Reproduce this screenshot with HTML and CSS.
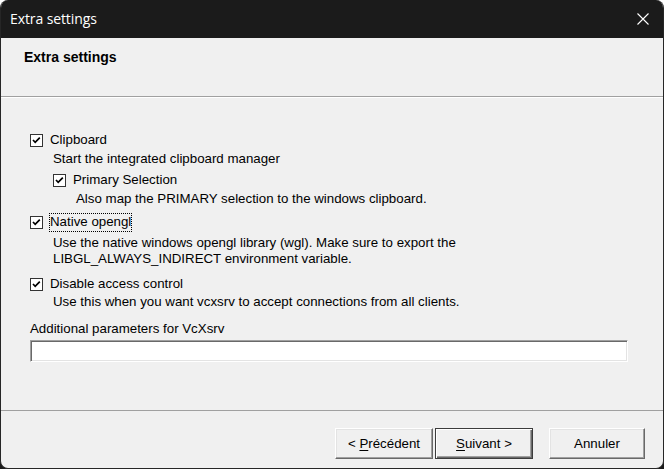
FILE: index.html
```html
<!DOCTYPE html>
<html>
<head>
<meta charset="utf-8">
<link rel="stylesheet" href="styles.css">
</head>
<body>
<div class="window">
  <div class="titlebar">
    <span class="title">Extra settings</span>
    <svg class="close" width="12" height="12" viewBox="0 0 12 12"><path d="M0.5 0.5 L11.5 11.5 M11.5 0.5 L0.5 11.5" stroke="#ffffff" stroke-width="1.1" fill="none"/></svg>
  </div>
  <div class="header">
    <h1 class="heading">Extra settings</h1>
  </div>
  <div class="content">
    <div class="option">
      <div class="check">
        <span class="box"><svg width="11" height="11" viewBox="0 0 11 11"><path d="M2 5 L4.2 7.3 L8.8 2.6" stroke="#000" stroke-width="1.7" fill="none"/></svg></span>
        <span class="label">Clipboard</span>
      </div>
      <p class="desc">Start the integrated clipboard manager</p>
      <div class="option sub">
        <div class="check">
          <span class="box"><svg width="11" height="11" viewBox="0 0 11 11"><path d="M2 5 L4.2 7.3 L8.8 2.6" stroke="#000" stroke-width="1.7" fill="none"/></svg></span>
          <span class="label">Primary Selection</span>
        </div>
        <p class="desc">Also map the PRIMARY selection to the windows clipboard.</p>
      </div>
    </div>
    <div class="option second">
      <div class="check">
        <span class="box"><svg width="11" height="11" viewBox="0 0 11 11"><path d="M2 5 L4.2 7.3 L8.8 2.6" stroke="#000" stroke-width="1.7" fill="none"/></svg></span>
        <span class="label focus">Native opengl</span>
      </div>
      <p class="desc wide">Use the native windows opengl library (wgl). Make sure to export the<br>LIBGL_ALWAYS_INDIRECT environment variable.</p>
    </div>
    <div class="option third">
      <div class="check">
        <span class="box"><svg width="11" height="11" viewBox="0 0 11 11"><path d="M2 5 L4.2 7.3 L8.8 2.6" stroke="#000" stroke-width="1.7" fill="none"/></svg></span>
        <span class="label">Disable access control</span>
      </div>
      <p class="desc tight">Use this when you want vcxsrv to accept connections from all clients.</p>
    </div>
    <div class="field">
      <span class="field-label">Additional parameters for VcXsrv</span>
      <div class="input"></div>
    </div>
  </div>
  <div class="footer">
    <button class="btn">&lt; <u>P</u>récédent</button>
    <button class="btn default"><u>S</u>uivant &gt;</button>
    <button class="btn cancel">Annuler</button>
  </div>
</div>
</body>
</html>
```

FILE: styles.css
```css
* { box-sizing: border-box; }
html, body {
  margin: 0;
  padding: 0;
  width: 664px;
  height: 469px;
  overflow: hidden;
  background: linear-gradient(#ffffff 50%, #1b1b1b 50%);
}
.window {
  width: 664px;
  height: 469px;
  background: #f0f0f0;
  border: 1px solid #262626;
  border-top: none;
  border-radius: 8px;
  overflow: hidden;
  display: flex;
  flex-direction: column;
  font-family: "Liberation Sans", Arial, sans-serif;
  font-size: 13.3px;
  color: #000;
}
.titlebar {
  height: 38px;
  flex: none;
  background: #1b1b1b;
  display: flex;
  align-items: center;
  justify-content: space-between;
  padding: 0 15px 0 10px;
  margin: 0 -1px;
}
.title {
  color: #ffffff;
  font-family: "Open Sans", "Liberation Sans", sans-serif;
  font-size: 14px;
  letter-spacing: -0.1px;
  padding-bottom: 1px;
}
.close { display: block; }
.header {
  height: 59px;
  flex: none;
  padding: 11px 0 0 23px;
  border-bottom: 1px solid #a0a0a0;
  box-shadow: 0 1px 0 #ffffff;
}
.heading {
  margin: 0;
  font-size: 14px;
  font-weight: bold;
  line-height: 16px;
}
.content {
  flex: 1;
  padding: 35px 0 0 29px;
  display: flex;
  flex-direction: column;
}
.option {
  display: flex;
  flex-direction: column;
}
.option.sub {
  margin: 5px 0 0 23px;
}
.option.second { margin-top: 7px; }
.option.third { margin-top: 9px; }
.check {
  display: flex;
  align-items: center;
  gap: 7px;
  height: 16px;
}
.box {
  width: 13px;
  height: 13px;
  flex: none;
  background: #ffffff;
  border: 1px solid #333333;
  display: flex;
  align-items: center;
  justify-content: center;
}
.box svg { display: block; }
.label { line-height: 16px; }
.focus {
  outline: 1px dotted #000;
  outline-offset: 0;
  padding-bottom: 1px;
}
.desc {
  margin: 3px 0 0 23px;
  line-height: 16px;
}
.desc.wide { margin-top: 5px; }
.desc.tight { margin-top: 2px; }
.field {
  margin-top: 11px;
  display: flex;
  flex-direction: column;
  gap: 3px;
}
.field-label { line-height: 16px; }
.input {
  width: 598px;
  height: 22px;
  background: #ffffff;
  border-style: solid;
  border-width: 1px;
  border-color: #a0a0a0 #ffffff #ffffff #a0a0a0;
  box-shadow: inset 1px 1px 0 #696969, inset -1px -1px 0 #e3e3e3;
}
.footer {
  height: 58px;
  flex: none;
  border-top: 1px solid #a0a0a0;
  display: flex;
  justify-content: flex-end;
  align-items: flex-start;
  padding: 17px 18px 0 0;
  gap: 2px;
}
.btn {
  width: 98px;
  height: 31px;
  font-family: "Liberation Sans", Arial, sans-serif;
  font-size: 13.3px;
  color: #000;
  background: #f0f0f0;
  border-style: solid;
  border-width: 1px;
  border-color: #ffffff #696969 #696969 #ffffff;
  box-shadow: inset -1px -1px 0 #a0a0a0, inset 1px 1px 0 #e3e3e3;
  padding: 0;
}
.btn.default {
  border: 1px solid #3c3c3c;
  box-shadow: inset 1px 1px 0 #ffffff, inset -1px -1px 0 #696969, inset -2px -2px 0 #a0a0a0;
}
.btn.cancel { margin-left: 14px; width: 96px; }
.btn u { text-decoration-thickness: 1px; text-underline-offset: 2px; }
```
